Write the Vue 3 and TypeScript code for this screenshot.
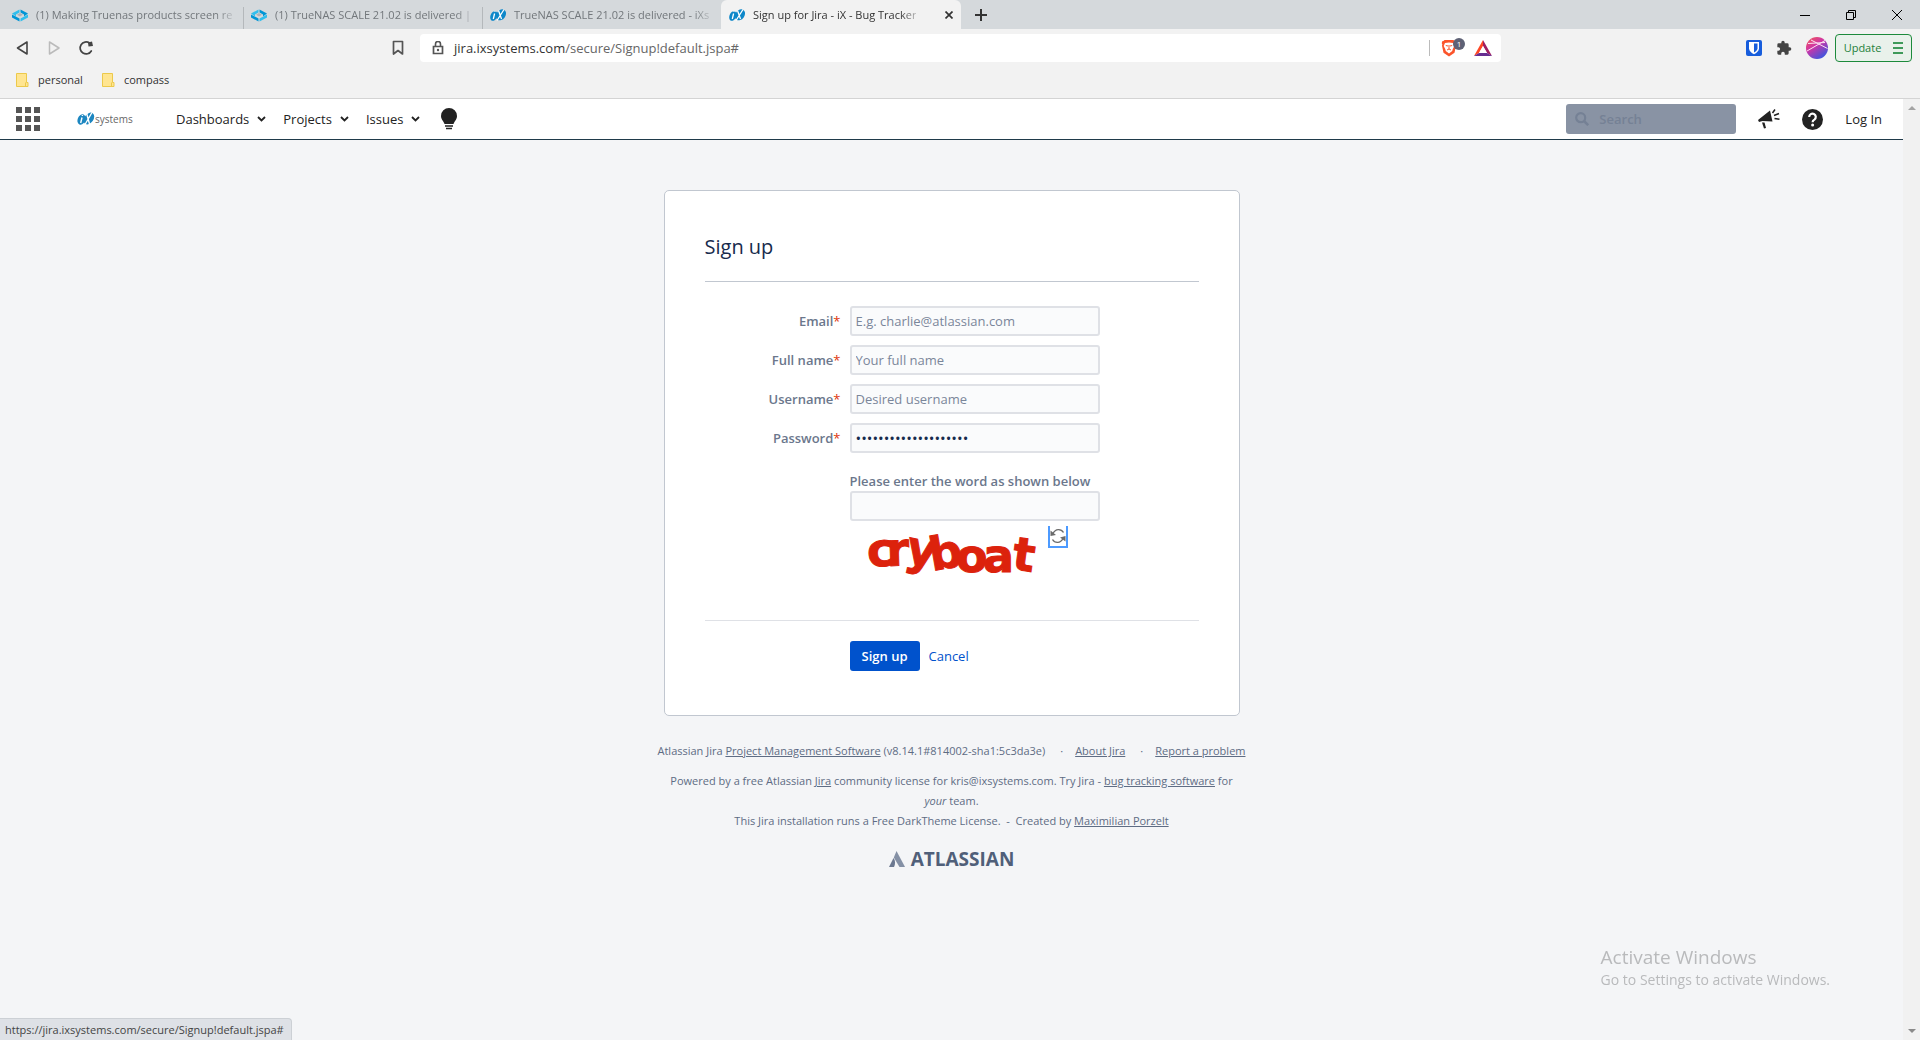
<script setup lang="ts">
import { ref } from 'vue'

interface Tab {
  title: string
  icon: 'nas' | 'ix'
  active: boolean
}
interface Field {
  id: string
  label: string
  type: string
  placeholder: string
  value: string
}

const tabs: Tab[] = [
  { title: '(1) Making Truenas products screen re', icon: 'nas', active: false },
  { title: '(1) TrueNAS SCALE 21.02 is delivered |', icon: 'nas', active: false },
  { title: 'TrueNAS SCALE 21.02 is delivered - iXs', icon: 'ix', active: false },
  { title: 'Sign up for Jira - iX - Bug Tracker', icon: 'ix', active: true },
]
const bookmarks = ['personal', 'compass']
const menus = ['Dashboards', 'Projects', 'Issues']

const fields = ref<Field[]>([
  { id: 'email', label: 'Email', type: 'email', placeholder: 'E.g. charlie@atlassian.com', value: '' },
  { id: 'fullname', label: 'Full name', type: 'text', placeholder: 'Your full name', value: '' },
  { id: 'username', label: 'Username', type: 'text', placeholder: 'Desired username', value: '' },
  { id: 'password', label: 'Password', type: 'password', placeholder: '', value: 'abcdefghijklmnopqrst' },
])
const captcha = ref('')
</script>

<template>
  <div class="window">
    <header class="tabstrip">
      <div class="tabs" role="tablist">
        <div v-for="tab in tabs" :key="tab.title" class="tab" :class="{ active: tab.active }">
          <button class="tab-main" role="tab" :aria-selected="tab.active">
            <svg v-if="tab.icon === 'nas'" width="16" height="16" viewBox="0 0 16 16">
              <path d="M0 6.500 7.500 2.500v3L4 7.500v2z" fill="#31beec" />
              <path d="M16 6.500 8.500 2.500v3L12 7.500v2z" fill="#0095d5" />
              <path d="M0 7.500v3l7.500 4v-3z" fill="#0095d5" />
              <path d="M16 7.500v3l-7.500 4v-3z" fill="#31beec" />
              <path d="m8 6 3 1.700L8 9.400 5 7.700z" fill="#aeb3b8" />
            </svg>
            <svg v-else width="16" height="16" viewBox="0 0 16 16">
              <ellipse cx="3.800" cy="9" rx="3.300" ry="5" transform="rotate(22 3.800 9)" fill="#0d87c9" />
              <ellipse cx="11" cy="7.800" rx="4.500" ry="6" transform="rotate(35 11 7.800)" fill="#0d87c9" />
              <path d="M4.600 6.500 3.300 12M5 4.300v.8M8.500 3.500l3 8.500M14 2.500 7 13.500" stroke="#fff" stroke-width="1.300" fill="none" />
            </svg>
            <span class="tab-title">{{ tab.title }}</span>
          </button>
          <button v-if="tab.active" class="tab-close" aria-label="Close tab">
            <svg width="8" height="8" viewBox="0 0 8 8"><path d="m.5.5 7 7m0-7-7 7" stroke="#333" stroke-width="1.700" /></svg>
          </button>
        </div>
        <button class="new-tab" aria-label="New tab">
          <svg width="12" height="12" viewBox="0 0 12 12"><path d="M6 0v12M0 6h12" stroke="#333" stroke-width="2" /></svg>
        </button>
      </div>
      <div class="window-controls">
        <button aria-label="Minimize"><svg width="10" height="10" viewBox="0 0 10 10"><path d="M0 5.500h10" stroke="#000" /></svg></button>
        <button aria-label="Restore"><svg width="10" height="10" viewBox="0 0 10 10"><path d="M.5 2.500h7v7h-7zM2.500 2.500v-2h7v7h-2" stroke="#000" fill="none" /></svg></button>
        <button aria-label="Close"><svg width="10" height="10" viewBox="0 0 10 10"><path d="m0 0 10 10m0-10L0 10" stroke="#000" /></svg></button>
      </div>
    </header>

    <div class="toolbar">
      <div class="history">
        <button aria-label="Back"><svg width="14" height="16" viewBox="0 0 14 16"><path d="M11 2v12L1.500 8z" fill="none" stroke="#444" stroke-width="1.600" stroke-linejoin="round" /></svg></button>
        <button aria-label="Forward"><svg width="14" height="16" viewBox="0 0 14 16"><path d="M2.500 2v12L12 8z" fill="none" stroke="#bbb" stroke-width="1.500" stroke-linejoin="round" /></svg></button>
        <button aria-label="Reload"><svg width="16" height="16" viewBox="0 0 16 16"><path d="M13.300 11A6 6 0 1 1 11.500 3" fill="none" stroke="#444" stroke-width="1.700" stroke-linecap="round" /><path d="M10 2.500 14 1.500l1 4.500-4.500.5z" fill="#444" /></svg></button>
        <button class="save" aria-label="Bookmark this page"><svg width="12" height="16" viewBox="0 0 12 16"><path d="M1.500 1.500h9v12.500L6 10.500 1.500 14z" fill="none" stroke="#555" stroke-width="1.700" stroke-linejoin="round" /></svg></button>
      </div>
      <div class="address">
        <svg width="12" height="14" viewBox="0 0 12 14"><path d="M1.500 5.500h9v7h-9z" fill="none" stroke="#555" stroke-width="1.700" /><path d="M3.500 5V3a2.500 2.500 0 0 1 5 0v2" fill="none" stroke="#555" stroke-width="1.600" /><circle cx="6" cy="9" r="1.200" fill="#555" /></svg>
        <p class="url">jira.ixsystems.com<span>/secure/Signup!default.jspa#</span></p>
        <button class="shield" aria-label="Shields">
          <svg width="16" height="18" viewBox="0 0 16 18">
            <path d="M3.500 1h9l1 1 1.300.2.500 2-.6 1 .3 1.500-1.500 7L8 17.500 2.500 13.700 1 6.700l.3-1.500-.6-1 .5-2L2.500 2z" fill="#fb542b" />
            <path d="m4 4 4-.6 4 .6 1.300 3-1.500 3-.6 2L8 14.500 4.800 12l-.6-2-1.500-3z" fill="#fff" />
            <path d="M4.800 6.500 7 7M11.200 6.500 9 7M8 6v4M6 11l2-1 2 1" stroke="#fb542b" fill="none" />
          </svg>
          <span class="count">1</span>
        </button>
        <button aria-label="Rewards">
          <svg width="18" height="16" viewBox="0 0 18 16"><path d="M9 0 0 16l5-3 4-7z" fill="#ff4724" /><path d="m9 0 9 16-5-3-4-7z" fill="#9e1f63" /><path d="M0 16h18l-5-3H5z" fill="#662d91" /><path d="m9 6 4 7H5z" fill="#fff" /></svg>
        </button>
      </div>
      <div class="extensions">
        <button aria-label="Password manager"><svg width="16" height="16" viewBox="0 0 16 16"><rect width="16" height="16" rx="2" fill="#175ddc" /><path d="M3 2h10v6.500c0 2.500-2.500 4.500-5 5.700C5.500 13 3 11 3 8.500z" fill="#fff" /><path d="M8 3.500h3.500V8.500c0 1.500-1.700 3-3.500 4z" fill="#175ddc" /></svg></button>
        <button aria-label="Extensions"><svg width="16" height="16" viewBox="0 0 24 24"><path d="M20.500 11H19V7a2 2 0 0 0-2-2h-4V3.500a2.500 2.500 0 0 0-5 0V5H4a2 2 0 0 0-2 2v3.800h1.500a2.700 2.700 0 0 1 0 5.400H2V20a2 2 0 0 0 2 2h3.800v-1.500a2.700 2.700 0 0 1 5.400 0V22H17a2 2 0 0 0 2-2v-4h1.500a2.500 2.500 0 0 0 0-5z" fill="#444" /></svg></button>
        <button aria-label="Profile">
          <svg width="22" height="22" viewBox="0 0 22 22">
            <defs><linearGradient id="avatar" x1="0" y1="0" x2=".7" y2="1"><stop offset="0" stop-color="#f45a4e" /><stop offset=".45" stop-color="#cf35a6" /><stop offset="1" stop-color="#3a55e0" /></linearGradient></defs>
            <circle cx="11" cy="11" r="11" fill="url(#avatar)" />
            <path d="M1 14 19 3.500M5 3l16.500 8.500M2 6.500l17-1" stroke="#fbe3f2" stroke-width="1" fill="none" />
          </svg>
        </button>
        <button class="update">Update
          <svg width="10" height="12" viewBox="0 0 10 12"><path d="M0 1h10M0 6h10M0 11h10" stroke="#3f9a5a" stroke-width="2" /></svg>
        </button>
      </div>
    </div>

    <nav class="bookmarks">
      <a v-for="name in bookmarks" :key="name" href="#">
        <svg width="13" height="14" viewBox="0 0 13 14"><path d="M.5.500h10v9h1.500v4H.5z" fill="#ffe591" stroke="#ecc94b" /><path d="M9.500 13V9.500" stroke="#ecc94b" /></svg>
        {{ name }}
      </a>
    </nav>

    <div class="viewport">
      <div class="page">
        <nav class="jira-nav">
          <button class="apps" aria-label="Linked applications">
            <svg width="24" height="24" viewBox="0 0 24 24"><path d="M0 0h6v6H0zM9 0h6v6H9zM18 0h6v6h-6zM0 9h6v6H0zM9 9h6v6H9zM18 9h6v6h-6zM0 18h6v6H0zM9 18h6v6H9zM18 18h6v6h-6z" fill="#555" /></svg>
          </button>
          <a class="brand" href="#" aria-label="iXsystems">
            <svg width="60" height="20" viewBox="0 0 60 20">
              <ellipse cx="4.500" cy="10.500" rx="3.800" ry="5.500" transform="rotate(22 4.500 10.500)" fill="#1c86c0" />
              <ellipse cx="12" cy="9.500" rx="4.500" ry="6.500" transform="rotate(35 12 9.500)" fill="#1c86c0" />
              <path d="M5 8.500 3.700 14M5.400 6v.9M9.500 4l3 11M15 3.500 8 15.500" stroke="#fff" stroke-width="1.400" fill="none" />
              <text x="18" y="14" font-size="10" fill="#666">systems</text>
            </svg>
          </a>
          <button v-for="menu in menus" :key="menu" class="menu">{{ menu }}
            <svg width="9" height="6" viewBox="0 0 9 6"><path d="m1 1 3.500 3.500L8 1" fill="none" stroke="#222" stroke-width="1.800" /></svg>
          </button>
          <button class="bulb" aria-label="Theme">
            <svg width="16" height="22" viewBox="0 0 16 22"><path d="M8 0a8 8 0 0 1 8 8c0 3.500-2.500 5-3.500 8h-9C2.500 13 0 11.500 0 8a8 8 0 0 1 8-8z" fill="#222" /><path d="M4 18h8M5 20.500h6" stroke="#222" stroke-width="1.500" /></svg>
          </button>
          <div class="nav-right">
            <label class="search">
              <svg width="14" height="14" viewBox="0 0 14 14"><circle cx="5.700" cy="5.700" r="4.500" fill="none" stroke="#758195" stroke-width="2.200" /><path d="m9 9 4.200 4.200" stroke="#758195" stroke-width="2.500" /></svg>
              <input type="text" placeholder="Search" aria-label="Search" />
            </label>
            <button aria-label="Feedback">
              <svg width="22" height="20" viewBox="0 0 22 20"><path d="m0 11 12-9.500 2.500 11L4.500 12 1 13z" fill="#222" /><path d="M4 13.500h2.500L8 19l-2 .5z" fill="#222" /><path d="m14.500 4 2.500-3.500M16 6.500l5-2M16.500 9.500l5 .8" stroke="#222" stroke-width="1.500" /></svg>
            </button>
            <button class="help" aria-label="Help">
              <svg width="21" height="21" viewBox="0 0 21 21"><circle cx="10.500" cy="10.500" r="10.500" fill="#222" /><path d="M7.200 8a3.300 3.300 0 1 1 5.200 2.600c-1.300.8-1.800 1.200-1.800 2.600" fill="none" stroke="#fff" stroke-width="2.200" /><circle cx="10.600" cy="15.900" r="1.500" fill="#fff" /></svg>
            </button>
            <a class="login" href="#">Log In</a>
          </div>
        </nav>

        <main class="content">
          <form class="card" @submit.prevent>
            <h1>Sign up</h1>
            <div class="fields">
              <div v-for="field in fields" :key="field.id" class="row">
                <label :for="field.id">{{ field.label }}<span>*</span></label>
                <input :id="field.id" v-model="field.value" :type="field.type" :placeholder="field.placeholder" autocomplete="off" />
              </div>
              <div class="captcha">
                <label for="captcha">Please enter the word as shown below</label>
                <input id="captcha" v-model="captcha" type="text" />
                <div class="challenge">
                  <svg width="198" height="56" viewBox="0 0 198 56" class="word">
                    <text x="18 37 54 82 106 133 161" y="41 40 36 45 46 46 43" rotate="-4 -2 12 -10 0 0 8">cryboat</text>
                  </svg>
                  <button class="refresh" type="button" aria-label="New word">
                    <svg width="16" height="16" viewBox="0 0 16 16"><path d="M13.500 4.500C11 .5 5.500.500 3 5.500M2.500 11.500c2.500 4 8 4 10.500-1" fill="none" stroke="#6b6b6b" stroke-width="1.400" /><path d="M.5 2.500v5.500l5.500-1zM15.500 13.500V8L10 9.500z" fill="#6b6b6b" /></svg>
                  </button>
                </div>
              </div>
            </div>
            <div class="actions">
              <button class="submit" type="submit">Sign up</button>
              <a href="#">Cancel</a>
            </div>
          </form>

          <footer class="footer">
            <ul>
              <li>Atlassian Jira <a href="#">Project Management Software</a> (v8.14.1#814002-sha1:5c3da3e)</li>
              <li><a href="#">About Jira</a></li>
              <li><a href="#">Report a problem</a></li>
            </ul>
            <p>Powered by a free Atlassian <a href="#">Jira</a> community license for kris@ixsystems.com. Try Jira - <a href="#">bug tracking software</a> for<br /><em>your</em> team.</p>
            <p>This Jira installation runs a Free DarkTheme License. &nbsp;-&nbsp; Created by <a href="#">Maximilian Porzelt</a></p>
            <a class="atlassian" href="#">
              <svg width="16" height="16" viewBox="0 0 16 16"><path d="M4.500 7C6.500 9.500 6.500 13 5 16H0z" fill="#6b7890" /><path d="m7.500 0 8.500 16h-5.500L4.800 6.500z" fill="#8490a5" /></svg>
              ATLASSIAN
            </a>
          </footer>
        </main>
      </div>
      <div class="scrollbar" aria-hidden="true">
        <svg width="8" height="4" viewBox="0 0 8 4"><path d="m4 0 4 4H0z" fill="#a3a3a3" /></svg>
        <svg width="8" height="4" viewBox="0 0 8 4"><path d="M0 0h8L4 4z" fill="#8a8a8a" /></svg>
      </div>
    </div>

    <div class="status">https://jira.ixsystems.com/secure/Signup!default.jspa#</div>
    <div class="watermark">
      <strong>Activate Windows</strong>
      <span>Go to Settings to activate Windows.</span>
    </div>
  </div>
</template>

<style>
body {
  background: #f4f5f7;
}
</style>

<style scoped>
.window {
  display: flex;
  flex-direction: column;
  min-height: 100vh;
  font: 13px/20px "Open Sans", "Noto Sans", sans-serif;
  color: #222;
}
* {
  box-sizing: border-box;
}
svg {
  display: block;
  flex: none;
}
button {
  display: flex;
  align-items: center;
  justify-content: center;
  padding: 0;
  border: 0;
  background: none;
  font: inherit;
  color: inherit;
}
a {
  color: inherit;
  text-decoration: none;
}
h1,
p,
ul {
  margin: 0;
  padding: 0;
}

.tabstrip {
  display: flex;
  justify-content: space-between;
  height: 29px;
  background: #d5d9dc;
}
.tabs {
  display: flex;
  font-size: 11px;
  color: #72777b;
}
.tab {
  display: flex;
  align-items: center;
  width: 239px;
  padding: 0 0 0 12px;
}
.tab-main {
  flex: 1;
  min-width: 0;
  gap: 8px;
  justify-content: flex-start;
}
.tab + .tab:not(.active) {
  background: linear-gradient(#b4b8bb, #b4b8bb) 4px 7px / 1px 22px no-repeat;
}
.tab-title {
  white-space: nowrap;
  mask-image: linear-gradient(90deg, #000 calc(100% - 16px), rgba(0, 0, 0, 0.3));
}
.tab.active {
  width: 240px;
  margin-left: 4px;
  padding: 0 8px;
  background: #f2f2f2;
  border-radius: 6px 6px 0 0;
  color: #333;
}
.tab-close {
  width: 8px;
}
.new-tab {
  width: 40px;
}
.window-controls {
  display: flex;
}
.window-controls button {
  width: 46px;
}

.toolbar {
  display: grid;
  grid-template-columns: 420px 1fr 419px;
  align-items: center;
  height: 38px;
  background: #f2f2f2;
}
.history {
  display: flex;
  align-items: center;
  gap: 17px;
  padding: 0 16px;
}
.history .save {
  margin-left: auto;
}
.address {
  display: flex;
  align-items: center;
  height: 28px;
  padding: 0 9px 0 12px;
  background: #fff;
  border-radius: 4px;
}
.url {
  flex: 1;
  margin-left: 10px;
  color: #333;
}
.url span {
  color: #666;
}
.shield {
  position: relative;
  width: 45px;
  height: 16px;
  padding-left: 11px;
  justify-content: flex-start;
  border-left: 1px solid #bbb;
}
.count {
  position: absolute;
  top: -2px;
  left: 23px;
  width: 12px;
  height: 12px;
  border-radius: 6px;
  background: #5e6175;
  color: #fff;
  font-size: 8px;
  line-height: 12px;
}
.extensions {
  display: flex;
  align-items: center;
  justify-content: flex-end;
  gap: 14px;
  padding-right: 8px;
}
.update {
  width: 77px;
  height: 28px;
  gap: 12px;
  margin-left: -7px;
  border: 1px solid #1d8a3c;
  border-radius: 4px;
  background: #e9f1eb;
  color: #1d7f3a;
  font-size: 11px;
}
.bookmarks {
  display: flex;
  align-items: center;
  gap: 19px;
  height: 32px;
  padding: 0 16px 6px;
  background: #f2f2f2;
  border-bottom: 1px solid #d4d4d4;
  font-size: 11px;
  color: #333;
}
.bookmarks a {
  display: flex;
  align-items: center;
  gap: 9px;
}

.viewport {
  display: flex;
  flex: 1;
}
.page {
  flex: 1;
  background: #f4f5f7;
}
.scrollbar {
  display: flex;
  flex-direction: column;
  align-items: center;
  justify-content: space-between;
  width: 17px;
  padding: 7px 0;
  background: #f1f1f1;
}
.jira-nav {
  display: flex;
  align-items: center;
  height: 41px;
  padding: 0 21px 0 16px;
  background: #fff;
  border-bottom: 1px solid #1f3a4a;
}
.brand {
  margin: 0 39px 0 37px;
}
.menu {
  gap: 8px;
  margin-right: 17px;
}
.bulb {
  margin-left: 4px;
}
.nav-right {
  display: flex;
  align-items: center;
  gap: 22px;
  margin-left: auto;
}
.search {
  display: flex;
  align-items: center;
  gap: 10px;
  width: 170px;
  height: 30px;
  padding: 0 9px;
  border-radius: 3px;
  background: #8993a4;
}
.search input {
  width: 100%;
  padding: 0;
  border: 0;
  outline: 0;
  background: none;
  font: inherit;
}
.search input::placeholder {
  color: #758195;
}

.content {
  display: flex;
  flex-direction: column;
  align-items: center;
  padding-top: 50px;
}
.card {
  width: 576px;
  padding: 40px 40px 44px;
  border: 1px solid #c1c7d0;
  border-radius: 5px;
  background: #fff;
}
h1 {
  height: 51px;
  border-bottom: 1px solid #c1c7d0;
  font-size: 20px;
  font-weight: 500;
  line-height: 32px;
  color: #172b4d;
}
.fields {
  display: flex;
  flex-direction: column;
  gap: 9px;
  height: 339px;
  padding-top: 24px;
  border-bottom: 1px solid #dfe1e6;
}
.row {
  display: grid;
  grid-template-columns: 136px 250px;
  gap: 9px;
  align-items: center;
}
label {
  font-weight: 600;
  color: #6b778c;
}
.row label {
  text-align: right;
}
.row label span {
  font-weight: 400;
  color: #de350b;
}
.row input,
.captcha input {
  width: 250px;
  height: 30px;
  padding: 3px 4px;
  border: 2px solid #dfe1e6;
  border-radius: 3px;
  outline: 0;
  background: #fafbfc;
  font: inherit;
  color: #172b4d;
}
.row input[type="password"] {
  font-size: 15px;
}
.row input::placeholder {
  color: #7a869a;
  opacity: 1;
}
.captcha {
  display: flex;
  flex-direction: column;
  margin: 9px 0 0 145px;
}
.challenge {
  display: flex;
  align-items: flex-start;
  padding-top: 5px;
}
.word {
  overflow: visible;
  font: 700 46px "DejaVu Sans", sans-serif;
  fill: #dc220c;
  stroke: #dc220c;
}
.refresh {
  width: 20px;
  height: 22px;
  border: 2px solid #4c9aff;
  border-top: 0;
}
.actions {
  display: flex;
  align-items: center;
  gap: 9px;
  padding: 20px 0 0 145px;
  color: #0052cc;
}
.submit {
  width: 70px;
  height: 30px;
  border-radius: 3px;
  background: #0052cc;
  color: #fff;
  font-weight: 600;
}
.footer {
  width: 600px;
  padding-top: 25px;
  font-size: 11px;
  text-align: center;
  color: #5e6c84;
}
.footer a {
  text-decoration: underline;
}
.footer ul {
  display: flex;
  justify-content: center;
  margin-bottom: 10px;
  list-style: none;
}
.footer li + li::before {
  content: "·";
  padding: 0 12px 0 15px;
}
.footer .atlassian {
  display: flex;
  align-items: center;
  justify-content: center;
  gap: 6px;
  margin-top: 18px;
  color: #505f79;
  font-size: 19px;
  font-weight: 700;
  text-decoration: none;
}

.status {
  position: fixed;
  bottom: 0;
  left: 0;
  height: 22px;
  padding: 1px 7px 0 5px;
  border: 1px solid #ccd0d5;
  border-width: 1px 1px 0 0;
  border-radius: 0 4px 0 0;
  background: #dee1e6;
  font-size: 11px;
  color: #444;
}
.watermark {
  position: fixed;
  right: 90px;
  bottom: 50px;
  display: flex;
  flex-direction: column;
  font-size: 14px;
  line-height: 20px;
  color: #b9babc;
}
.watermark strong {
  font-size: 19px;
  font-weight: 400;
  line-height: 26px;
}
</style>
